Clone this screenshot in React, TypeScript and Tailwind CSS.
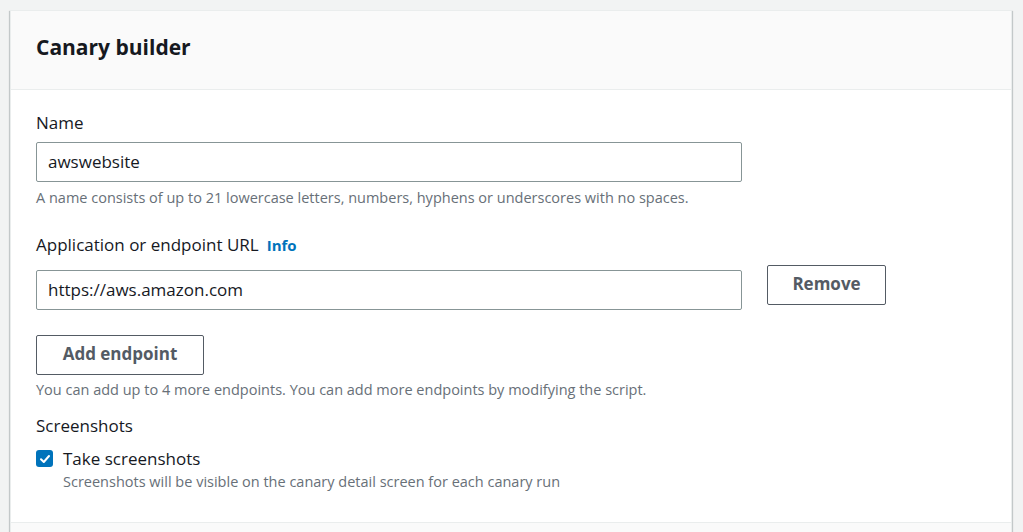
import React from "react";

export default function App() {
  return (
    <div
      className="min-h-[532px] w-full bg-[#f2f3f3] pt-[10px] pl-[10px] pr-[11px]"
      style={{ fontFamily: '"Open Sans", "Noto Sans", Arial, sans-serif' }}
    >
      <div className="border border-[#eaeded] bg-white shadow-[0_1px_1px_0_rgba(0,28,36,0.3),1px_1px_1px_0_rgba(0,28,36,0.15),-1px_1px_1px_0_rgba(0,28,36,0.15)]">
        <div className="flex h-[79px] items-center border-b border-[#eaeded] bg-[#fafafa] px-[25px] pb-[7px]">
          <h2 className="text-[21px] font-bold leading-[28px] text-[#16191f]">Canary builder</h2>
        </div>
        <div className="px-[25px] pt-[22px] pb-[30px] text-[#16191f]">
          <div className="text-[17px] leading-[22px]">Name</div>
          <div className="mt-[8px] flex h-[40px] w-[706px] items-center rounded-[2px] border border-[#879596] px-[11px] text-[17px]">
            awswebsite
          </div>
          <div className="mt-[6px] text-[14.5px] leading-[20px] text-[#687078]">
            A name consists of up to 21 lowercase letters, numbers, hyphens or underscores with no spaces.
          </div>

          <div className="mt-[26px] flex items-baseline gap-[8px]">
            <span className="text-[17px] leading-[22px]">Application or endpoint URL</span>
            <span className="text-[15px] font-bold text-[#0073bb]">Info</span>
          </div>
          <div className="mt-[8px] flex items-start gap-[25px]">
            <div className="mt-[5px] flex h-[40px] w-[706px] items-center rounded-[2px] border border-[#879596] px-[11px] text-[17px]">
              https://aws.amazon.com
            </div>
            <button className="flex h-[40px] w-[119px] items-center justify-center rounded-[2px] border border-[#545b64] bg-white pb-[1px] text-[17px] font-bold text-[#545b64]">
              Remove
            </button>
          </div>

          <button className="mt-[25px] flex h-[40px] w-[168px] items-center justify-center rounded-[2px] border border-[#545b64] bg-white pb-[1px] text-[17px] font-bold text-[#545b64]">
            Add endpoint
          </button>
          <div className="mt-[5px] text-[14.5px] leading-[20px] text-[#687078]">
            You can add up to 4 more endpoints. You can add more endpoints by modifying the script.
          </div>

          <div className="mt-[15px] text-[17px] leading-[22px]">Screenshots</div>
          <div className="mt-[11px] flex items-center gap-[10px]">
            <span className="flex h-[17px] w-[17px] items-center justify-center rounded-[3px] bg-[#0073bb]">
              <svg width="12" height="12" viewBox="0 0 12 12" fill="none">
                <path d="M2 6.2 L4.8 9 L10 3" stroke="white" strokeWidth="2" strokeLinecap="round" strokeLinejoin="round" />
              </svg>
            </span>
            <span className="text-[17px] leading-[22px]">Take screenshots</span>
          </div>
          <div className="mt-[2px] pl-[27px] text-[14.5px] leading-[20px] text-[#687078]">
            Screenshots will be visible on the canary detail screen for each canary run
          </div>
        </div>
        <div className="h-[20px] border-t border-[#eaeded] bg-[#fafafa]" />
      </div>
    </div>
  );
}
